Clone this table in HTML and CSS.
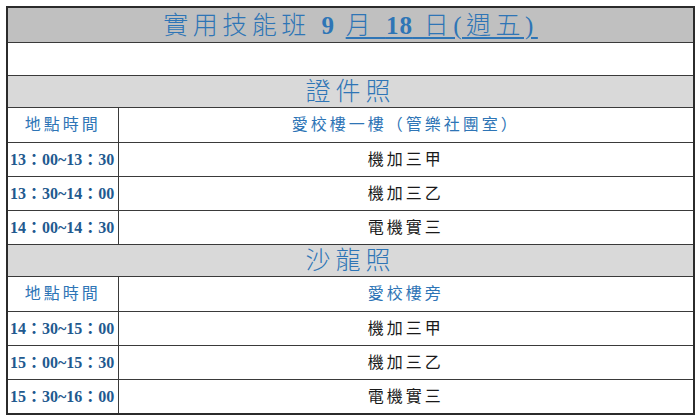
FILE: index.html
```html
<!DOCTYPE html>
<html lang="zh-Hant">
<head>
<meta charset="utf-8">
<title>實用技能班</title>
<link rel="stylesheet" href="styles.css">
</head>
<body>
<table class="sched">
  <colgroup><col class="c1"><col class="c2"></colgroup>
  <tr class="title"><td colspan="2">實用技能班 <b>9</b> <u>月 <b>18</b> 日(週五)</u></td></tr>
  <tr class="blank"><td colspan="2"></td></tr>
  <tr class="sec"><td colspan="2">證件照</td></tr>
  <tr class="head"><td class="lbl">地點時間</td><td class="loc">愛校樓一樓（管樂社團室）</td></tr>
  <tr class="row"><td class="time">13：00~13：30</td><td class="cls">機加三甲</td></tr>
  <tr class="row"><td class="time">13：30~14：00</td><td class="cls">機加三乙</td></tr>
  <tr class="row"><td class="time">14：00~14：30</td><td class="cls">電機實三</td></tr>
  <tr class="sec"><td colspan="2">沙龍照</td></tr>
  <tr class="head"><td class="lbl">地點時間</td><td class="loc">愛校樓旁</td></tr>
  <tr class="row"><td class="time">14：30~15：00</td><td class="cls">機加三甲</td></tr>
  <tr class="row"><td class="time">15：00~15：30</td><td class="cls">機加三乙</td></tr>
  <tr class="row last"><td class="time">15：30~16：00</td><td class="cls">電機實三</td></tr>
</table>
</body>
</html>
```
FILE: styles.css
```css
html, body { margin: 0; padding: 0; background: #ffffff; }
body { font-family: "Liberation Serif", "Noto Sans CJK TC", serif; }
.sched {
  margin: 6px 0 0 6px;
  width: 689px;
  border-collapse: collapse;
  table-layout: fixed;
  border: 2px solid #2b2b2b;
}
.c1 { width: 111px; }
.sched td {
  border: 1px solid #3a3a3a;
  padding: 0;
  vertical-align: middle;
  line-height: 1;
}
.title td {
  height: 34px;
  background: #c0c0c0;
  color: #2e75b6;
  text-align: center;
  font-size: 25px;
  letter-spacing: 4.5px;
  font-weight: 300;
}
.title b { font-weight: bold; letter-spacing: 1px; }
.title u { text-decoration-thickness: 2px; text-underline-offset: 3px; }
.blank td { height: 32px; }
.sec td {
  height: 31px;
  background: #d9d9d9;
  color: #2e75b6;
  text-align: center;
  font-size: 25px;
  letter-spacing: 5px;
  font-weight: 300;
}
.head td { height: 34px; }
.lbl, .loc {
  color: #2e75b6;
  text-align: center;
  font-size: 16px;
  letter-spacing: 3px;
}
.row td { height: 33px; }
.time {
  color: #1f5a8f;
  font-weight: bold;
  font-size: 16px;
  padding-left: 2px !important;
  white-space: nowrap;
  letter-spacing: 0;
}
.cls {
  color: #1a1a1a;
  text-align: center;
  font-size: 16px;
  letter-spacing: 3px;
}
```
